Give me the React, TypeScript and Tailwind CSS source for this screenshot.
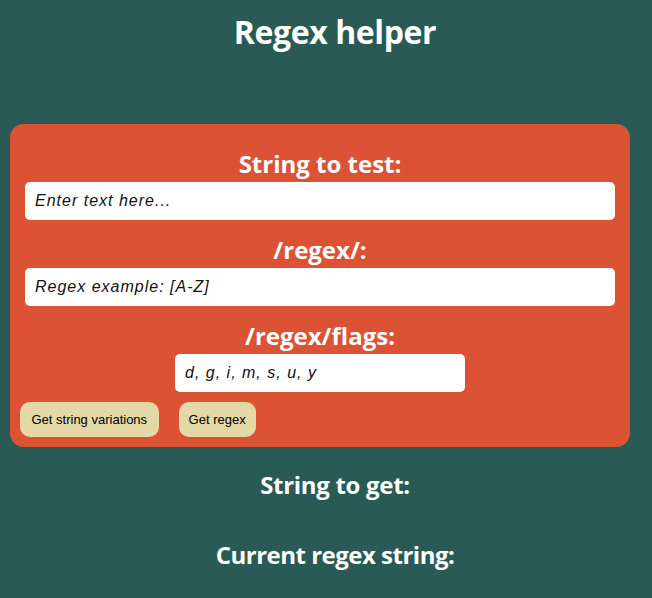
export default function App() {
  const heading = "font-['Open_Sans',sans-serif] text-[24px] font-bold leading-[32px] text-white text-center";
  const field =
    "h-[38px] rounded-[5px] bg-white px-[10px] font-['Liberation_Sans',Arial,sans-serif] text-[16px] italic tracking-[1px] text-black outline-none placeholder:text-[#111]";

  return (
    <div className="min-h-screen bg-[#2a5a56] pt-[10px]">
      <h1 className="pl-[18px] text-center font-['Open_Sans',sans-serif] text-[32px] font-bold leading-[44px] tracking-[-0.4px] text-white">
        Regex helper
      </h1>

      <div className="mx-[10px] mt-[70px] flex w-[620px] flex-col rounded-[14px] bg-[#db5235] px-[10px] pb-[10px] pt-[24px]">
        <h2 className={heading}>String to test:</h2>
        <input className={`mx-[5px] mt-[2px] ${field}`} placeholder="Enter text here..." />

        <h2 className={`${heading} mt-[14px]`}>/regex/:</h2>
        <input className={`mx-[5px] mt-[2px] ${field}`} placeholder="Regex example: [A-Z]" />

        <h2 className={`${heading} mt-[14px]`}>/regex/flags:</h2>
        <input className={`mx-auto mt-[2px] w-[290px] ${field}`} placeholder="d, g, i, m, s, u, y" />

        <div className="mt-[10px] flex gap-[20px]">
          <button className="h-[35px] rounded-[10px] bg-[#e4d8a7] px-[11.5px] font-['Liberation_Sans',Arial,sans-serif] text-[13px] text-black">
            Get string variations
          </button>
          <button className="h-[35px] rounded-[10px] bg-[#e4d8a7] px-[10px] font-['Liberation_Sans',Arial,sans-serif] text-[13px] text-black">
            Get regex
          </button>
        </div>
      </div>

      <h2 className={`${heading} mt-[22px] pl-[18px] tracking-[-0.3px]`}>String to get:</h2>
      <h2 className={`${heading} mt-[38px] pl-[18px] tracking-[-0.5px]`}>Current regex string:</h2>
    </div>
  );
}
